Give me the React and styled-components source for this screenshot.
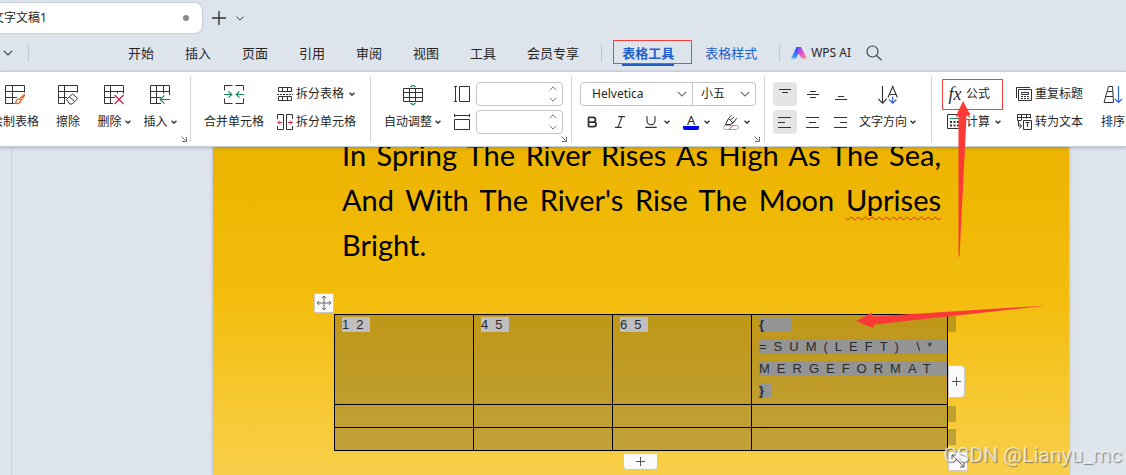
import styled, { createGlobalStyle, css } from "styled-components";
import { Bold, Italic, Underline } from "lucide-react";

const ink = "#333333";
const green = "#13855f";
const red = "#cf1f4c";
const blue = "#2b5fd9";

/* ---------- icons ---------- */

const Caret = () => (
  <svg width="6" height="4" viewBox="0 0 6 4" fill="none" stroke="#3c3c3c" strokeWidth="1.5">
    <path d="M.5.7 3 3.1 5.5.7" />
  </svg>
);

const Chevron = ({ size = 10, up, color = "#707070" }) => (
  <svg
    width={size}
    height={size / 2 + 1}
    viewBox="0 0 10 6"
    fill="none"
    stroke={color}
    strokeWidth="1.2"
  >
    <path d={up ? "M.8 5.2 5 1l4.2 4.2" : "M.8.8 5 5 9.2.8"} />
  </svg>
);

const Icon = ({ w = 20, h = 20, children }) => (
  <svg width={w} height={h} viewBox={`0 0 ${w} ${h}`} fill="none" stroke={ink}>
    {children}
  </svg>
);

const DrawTableIcon = () => (
  <Icon>
    <path d="M9 18.5H.5V.5h19v7M.5 6.5h19M.5 12.5H12M7.5.5v18" />
    <path
      d="M19.7 9.2 14 14.4M20 9.8l-4.4 6M13.6 14c1.4 0 2.2 1 2 2.2-.4 2-3 2.7-6 2.3 1.5-.6 1.4-1.5 1.8-2.700.4-1.200 1.200-1.800 2.200-1.800z"
      stroke="#d2622a"
      strokeWidth="1.2"
    />
  </Icon>
);

const EraseIcon = () => (
  <Icon>
    <path d="M7 18.5H.5V.5h19v7M.5 6.5h19M.5 12.5H9M6.5.5v18" />
    <path d="M8.5 14.5 14.5 9l5.200 4.500-5.500 5.500h-2.400zM11.500 12l5 4.500" />
  </Icon>
);

const DeleteIcon = () => (
  <Icon>
    <path d="M9 18.5H.5V.5h19v8M.5 6.5h19M.5 12.5H11M6.5.5v18M13.5 6.5v2" />
    <path d="m10.5 10 9 9M19.5 10l-9 9" stroke={red} strokeWidth="1.2" />
  </Icon>
);

const InsertIcon = () => (
  <Icon>
    <path d="M11 18.5H.5V.5h19V10M.5 6.5h19M.5 12.5H11M6.5.5v18M13.5.5v8" />
    <path d="M20 14.5h-9.500M14.500 10.300l-4.200 4.200 4.200 4.200" stroke={green} strokeWidth="1.2" />
  </Icon>
);

const MergeIcon = () => (
  <Icon>
    <path d="M8.500.5h-8v5M11.500.5h8v5M8.500 18.500h-8v-5M11.500 18.500h8v-5" />
    <path
      d="M0 9.5h7.500M4.500 6.300l3.200 3.200-3.200 3.200M20 9.500h-7.500M15.500 6.300l-3.200 3.200 3.200 3.200"
      stroke={green}
      strokeWidth="1.2"
    />
  </Icon>
);

const SplitTableIcon = () => (
  <Icon w={16} h={16}>
    <path d="M1.5 5.5v-4h13v4M1.5 5.5h13M5.5 1.5v4M10.5 1.5v4M1.5 10.5v4h13v-4zM5.5 10.5v4M10.5 10.5v4" />
    <path d="M0 8.5h16" strokeDasharray="2 1" />
  </Icon>
);

const SplitCellIcon = () => (
  <Icon w={16} h={16}>
    <path d="M.5 5V.5h6v15h-6V12M15.5 5V.5h-6v15h6V12" />
    <path d="M5 8.5H.8M2.800 6.500l-2 2 2 2M11 8.500h4.200M13.200 6.500l2 2-2 2" stroke={red} />
  </Icon>
);

const AutoFitIcon = () => (
  <Icon>
    <path d="M.5 3.5h19v13H.5zM.5 7.5h19M.5 12.5h19M6.5 3.5v13M12.5 3.5v13" />
    <path d="m7.5 2 2.500-2 2.500 2M7.500 18l2.500 2 2.500-2" stroke={green} strokeWidth="1.3" />
  </Icon>
);

const HeightIcon = () => (
  <Icon w={16} h={16}>
    <path d="M1.5.5v15M0 .5h3M0 15.5h3M5.5.5h10v15h-10z" />
  </Icon>
);

const WidthIcon = () => (
  <Icon w={16} h={16}>
    <path d="M.5 1.5h15M.5 0v3M15.5 0v3M.5 5.5h15v10H.5z" />
  </Icon>
);

const HighlightIcon = () => (
  <Icon w={16} h={16}>
    <path d="M2.500 10.500 5.500 4.500 10 9l-3 1.500H2.500M5.500 4.500 8.800.8M13.800 4.200 10 9M7 6.500l4-3.500" />
    <rect x=".5" y="11.5" width="15" height="4" rx="2" stroke="#a5a5a5" />
    <path d="m6 15 4-3.200" stroke="#e04444" />
  </Icon>
);

const lineSets = {
  top: "M1 2.5h12M4 5.5h6",
  middle: "M4 4.5h6M1 7.5h12M4 10.5h6",
  bottom: "M4 9.5h6M1 12.5h12",
  left: "M0 2.5h13M0 7.5h7M0 12.5h13",
  center: "M0 2.5h13M3 7.5h7M0 12.5h13",
  right: "M0 2.5h13M6 7.5h7M0 12.5h13",
};

const LinesIcon = ({ kind }) => (
  <Icon w={14} h={14}>
    <path d={lineSets[kind]} />
  </Icon>
);

const DirectionIcon = () => (
  <Icon>
    <path d="M4.500 1v17M.3 14l4.200 4.200L8.700 14M10 12.500l4.700-11 4.700 11M11.500 9.500h6.400" strokeWidth="1.100" />
    <path d="M14.700 11.500v6.700M11 14.500l3.700 3.700 3.700-3.700" stroke={blue} strokeWidth="1.200" />
  </Icon>
);

const CalcIcon = () => (
  <Icon w={16} h={16}>
    <path d="M14.500.5H.5v14h14z" />
    <path d="M2.500 4.500h10" stroke={green} />
    <path d="M3 8h10M3 11.500h10" strokeWidth="2" strokeDasharray="2 1.5" />
  </Icon>
);

const RepeatTitleIcon = () => (
  <Icon w={16} h={16}>
    <path d="M.5 12V1.500H14M2.500 14.500v-11h13v11zM5.500 6.500h7v2h-7zM5 10.500h2M8 10.500h2M11 10.500h2M5 12.500h2M8 12.500h2M11 12.500h2" />
  </Icon>
);

const ToTextIcon = () => (
  <Icon w={16} h={16}>
    <path d="M5 6.500H1.500v-6h13v4M1.500 3.500h13M5.500.5v6M10.500.5v4M2.500 7v5H5M3.500 9.500 5.500 12l-2 2.500M7.500 6.500h8v9h-8zM9.500 8.500h4M11.500 8.500V13" />
  </Icon>
);

const SortIcon = () => (
  <Icon>
    <path d="M1 17.500h9.500L9.500 1.500H5.500zM4.500 6.500h5.200M3 11.500h7" />
    <path d="M15.500 1v16.500M12 14l3.500 3.500L19 14" stroke={blue} strokeWidth="1.200" />
  </Icon>
);

const LauncherIcon = () => (
  <svg width="6" height="6" viewBox="0 0 6 6" fill="none" stroke="#6b6b6b">
    <path d="M.5.5 4.5 4.5M5.5 1v4.5H1" />
  </svg>
);

const AiLogo = () => (
  <svg width="16" height="12" viewBox="0 0 16 12">
    <defs>
      <linearGradient id="ai-left" x1="0" y1="1" x2="1" y2="0">
        <stop offset="0" stopColor="#4fc3ff" />
        <stop offset=".5" stopColor="#3567f5" />
        <stop offset="1" stopColor="#5b35ee" />
      </linearGradient>
      <linearGradient id="ai-right" x1="0" y1="0" x2="1" y2="1">
        <stop offset="0" stopColor="#5b4cf5" />
        <stop offset=".5" stopColor="#e950d0" />
        <stop offset="1" stopColor="#ff9a78" />
      </linearGradient>
    </defs>
    <path d="M5.500 0H10L5 11.500H0z" fill="url(#ai-left)" />
    <path d="M7.500 0H10l6 11.500h-5L6.500 5.500z" fill="url(#ai-right)" />
  </svg>
);

const SearchIcon = () => (
  <svg width="16" height="16" viewBox="0 0 16 16" fill="none" stroke="#444" strokeWidth="1.2">
    <circle cx="6.5" cy="6.5" r="5.5" />
    <path d="m10.5 10.500 5 4.700" />
  </svg>
);

const PlusIcon = () => (
  <svg width="9" height="9" viewBox="0 0 9 9" stroke="#555">
    <path d="M4.5 0v9M0 4.5h9" />
  </svg>
);

/* ---------- ribbon parts ---------- */

const BigAction = ({ icon, label, menu }) => (
  <BigButton>
    {icon}
    <ActionLabel>
      {label}
      {menu && <Caret />}
    </ActionLabel>
  </BigButton>
);

const SmallAction = ({ icon, label, menu, marked }) => (
  <SmallButton $marked={marked}>
    {icon}
    {label}
    {menu && (
      <CaretSlot>
        <Caret />
      </CaretSlot>
    )}
  </SmallButton>
);

const SizeField = ({ id, label, icon }) => (
  <SizeRow>
    <label htmlFor={id} aria-label={label}>
      {icon}
    </label>
    <SpinBox>
      <SpinInput id={id} type="text" />
      <SpinArrows>
        <Chevron size={8} up />
        <Chevron size={8} />
      </SpinArrows>
    </SpinBox>
  </SizeRow>
);

const Picker = ({ label, value, width, first }) => (
  <PickerBox $width={width} $first={first}>
    <PickerSelect aria-label={label} defaultValue={value} $indent={first ? 11 : 8}>
      <option>{value}</option>
    </PickerSelect>
    <Chevron size={10} />
  </PickerBox>
);

const Launch = ({ label }) => (
  <LaunchButton aria-label={label}>
    <LauncherIcon />
  </LaunchButton>
);

const tabs = ["开始", "插入", "页面", "引用", "审阅", "视图", "工具", "会员专享"];

const App = () => {
  return (
    <>
      <GlobalStyle />
      <Window>
        <TitleBar>
          <FileTab>
            文字文稿1
            <UnsavedDot />
          </FileTab>
          <IconButton aria-label="新建">
            <svg width="14" height="14" viewBox="0 0 14 14" stroke="#333" strokeWidth="1.4">
              <path d="M7 0v14M0 7h14" />
            </svg>
          </IconButton>
          <IconButton aria-label="更多">
            <Chevron size={8} color="#333" />
          </IconButton>
        </TitleBar>

        <MenuBar>
          <MenuStart>
            <IconButton aria-label="展开">
              <Chevron size={10} color="#444" />
            </IconButton>
            <MenuRule />
          </MenuStart>
          <TabList>
            {tabs.map((tab) => (
              <MenuTab key={tab} href="#">
                {tab}
              </MenuTab>
            ))}
          </TabList>
          <MenuRule />
          <TabList>
            <MenuTab href="#" $context $active>
              表格工具
            </MenuTab>
            <MenuTab href="#" $context>
              表格样式
            </MenuTab>
          </TabList>
          <MenuRule />
          <AiLink href="#">
            <AiLogo />
            WPS AI
          </AiLink>
          <IconButton aria-label="搜索">
            <SearchIcon />
          </IconButton>
        </MenuBar>

        <Ribbon>
          <Group $start $end={3}>
            <BigAction icon={<DrawTableIcon />} label="绘制表格" />
            <BigAction icon={<EraseIcon />} label="擦除" />
            <BigAction icon={<DeleteIcon />} label="删除" menu />
            <BigAction icon={<InsertIcon />} label="插入" menu />
            <Launch label="表格属性" />
          </Group>
          <Group $end={14}>
            <BigAction icon={<MergeIcon />} label="合并单元格" />
            <Stack $offset={7}>
              <SmallAction icon={<SplitTableIcon />} label="拆分表格" menu />
              <SmallAction icon={<SplitCellIcon />} label="拆分单元格" />
            </Stack>
          </Group>
          <Group>
            <BigAction icon={<AutoFitIcon />} label="自动调整" menu />
            <Stack $offset={7}>
              <SizeField id="row-height" label="高度" icon={<HeightIcon />} />
              <SizeField id="col-width" label="宽度" icon={<WidthIcon />} />
            </Stack>
            <Launch label="单元格大小" />
          </Group>
          <Group>
            <Stack>
              <Row>
                <Picker label="字体" value="Helvetica" width={113} first />
                <Picker label="字号" value="小五" width={63} />
              </Row>
              <Row $gap={4}>
                <ToggleButton aria-label="加粗">
                  <Bold size={14} color={ink} strokeWidth={3} />
                </ToggleButton>
                <ToggleButton aria-label="倾斜">
                  <Italic size={16} color={ink} strokeWidth={1.75} />
                </ToggleButton>
                <FormatButton aria-label="下划线">
                  <Underline size={16} color={ink} strokeWidth={1.75} />
                  <Caret />
                </FormatButton>
                <FormatButton>
                  <FontColor>A</FontColor>
                  <Caret />
                </FormatButton>
                <FormatButton aria-label="突出显示">
                  <HighlightIcon />
                  <Caret />
                </FormatButton>
              </Row>
            </Stack>
            <Launch label="字体设置" />
          </Group>
          <Group $end={9}>
            <Stack>
              <Row $gap={4}>
                <ToggleButton aria-label="顶端对齐" $on>
                  <LinesIcon kind="top" />
                </ToggleButton>
                <ToggleButton aria-label="垂直居中">
                  <LinesIcon kind="middle" />
                </ToggleButton>
                <ToggleButton aria-label="底端对齐">
                  <LinesIcon kind="bottom" />
                </ToggleButton>
              </Row>
              <Row $gap={4}>
                <ToggleButton aria-label="左对齐" $on>
                  <LinesIcon kind="left" />
                </ToggleButton>
                <ToggleButton aria-label="居中">
                  <LinesIcon kind="center" />
                </ToggleButton>
                <ToggleButton aria-label="右对齐">
                  <LinesIcon kind="right" />
                </ToggleButton>
              </Row>
            </Stack>
            <BigAction icon={<DirectionIcon />} label="文字方向" menu />
          </Group>
          <Group>
            <Stack $offset={8}>
              <SmallAction icon={<FxMark>fx</FxMark>} label="公式" marked />
              <SmallAction icon={<CalcIcon />} label="计算" menu />
            </Stack>
            <Stack $offset={15}>
              <SmallAction icon={<RepeatTitleIcon />} label="重复标题" />
              <SmallAction icon={<ToTextIcon />} label="转为文本" />
            </Stack>
            <Spacer />
            <BigAction icon={<SortIcon />} label="排序" />
          </Group>
        </Ribbon>

        <Workspace>
          <Gutter />
          <Page>
            <Verse>
              <VerseLine $full>In Spring The River Rises As High As The Sea,</VerseLine>
              <VerseLine $full>
                And With The River's Rise The Moon <Misspelt>Uprises</Misspelt>
              </VerseLine>
              <VerseLine>Bright.</VerseLine>
            </Verse>

            <TableFrame>
              <DataTable>
                <colgroup>
                  <NarrowCol />
                  <NarrowCol />
                  <NarrowCol />
                  <col />
                </colgroup>
                <tbody>
                  <tr>
                    <Cell>
                      <Selected>12</Selected>
                    </Cell>
                    <Cell>
                      <Selected>45</Selected>
                    </Cell>
                    <Cell>
                      <Selected>65</Selected>
                    </Cell>
                    <Cell $last>
                      <Field>
                        <Selected $field>
                          <b>{"{"}</b>
                          {"  "}
                        </Selected>
                        <Selected $field $fill>
                          {"=SUM(LEFT) \\*"}
                        </Selected>
                        <Selected $field $fill>
                          MERGEFORMAT
                        </Selected>
                        <Selected $field>
                          <b>{"}"}</b>
                        </Selected>
                      </Field>
                    </Cell>
                  </tr>
                  {[1, 2].map((row) => (
                    <tr key={row}>
                      <Cell />
                      <Cell />
                      <Cell />
                      <Cell $last />
                    </tr>
                  ))}
                </tbody>
              </DataTable>
              <MoveHandle aria-label="移动表格">
                <svg width="16" height="16" viewBox="0 0 16 16" fill="none" stroke="#666">
                  <path d="M8 1v14M1 8h14M6 3l2-2 2 2M6 13l2 2 2-2M3 6 1 8l2 2M13 6l2 2-2 2" />
                </svg>
              </MoveHandle>
              <AddColumn aria-label="添加列">
                <PlusIcon />
              </AddColumn>
              <AddRow aria-label="添加行">
                <PlusIcon />
              </AddRow>
              <ResizeHandle aria-label="调整表格大小">
                <svg width="14" height="14" viewBox="0 0 14 14" fill="none" stroke="#555">
                  <path d="M1 1l12 12M1 5V1h4M13 9v4H9" />
                </svg>
              </ResizeHandle>
            </TableFrame>
          </Page>
        </Workspace>

        <UpArrow width="16" height="156" viewBox="0 0 16 156">
          <path d="M8 0 15.500 14l-4 1L4.500 155.500h-1V15L.5 16z" />
        </UpArrow>
        <LeftArrow width="192" height="24" viewBox="0 0 192 24">
          <path d="M0 16 16 7.500l.5 4L191 .5 18 19.500l-.5 3.500z" />
        </LeftArrow>
        <Watermark>CSDN @Lianyu_mc</Watermark>
      </Window>
    </>
  );
};

/* ---------- styles ---------- */

const GlobalStyle = createGlobalStyle`
  * {
    box-sizing: border-box;
  }

  body {
    margin: 0;
    background: #dee4ec;
    color: #262626;
    font-family: "Noto Sans", "Noto Sans CJK SC", sans-serif;
    font-size: 12px;
    line-height: 16px;
  }

  svg {
    display: block;
    flex: none;
  }

  button {
    padding: 0;
    border: none;
    background: transparent;
    color: inherit;
    font: inherit;
    cursor: pointer;
  }
`;

const Window = styled.div`
  position: relative;
  display: flex;
  flex-direction: column;
  min-height: 100vh;
  overflow: hidden;
`;

const TitleBar = styled.header`
  display: flex;
  align-items: center;
  gap: 10px;
  padding: 3px 0 1px;
`;

/* the tab strip is scrolled a little past its left edge */
const FileTab = styled.div`
  display: flex;
  align-items: center;
  justify-content: space-between;
  width: 210px;
  height: 30px;
  margin-left: -8px;
  padding-right: 13px;
  border-radius: 0 7px 7px 0;
  background: #fff;
  box-shadow: 0 0 2px rgba(70, 90, 120, 0.5);
`;

const UnsavedDot = styled.span`
  width: 6px;
  height: 6px;
  border-radius: 50%;
  background: #8c8c8c;
`;

const IconButton = styled.button`
  display: flex;
  align-items: center;
`;

const MenuBar = styled.nav`
  display: flex;
  align-items: center;
  height: 37px;
  font-size: 13px;
  white-space: nowrap;
`;

const MenuStart = styled.div`
  display: flex;
  align-items: center;
  gap: 15px;
  width: 128px;
  padding-left: 3px;
`;

const MenuRule = styled.span`
  flex: none;
  width: 1px;
  height: 18px;
  background: #c0c5cc;
`;

const TabList = styled.div`
  display: flex;
  gap: 31px;
  padding-right: 22px;

  ${MenuRule} + & {
    padding-left: 20px;
  }
`;

const MenuTab = styled.a`
  position: relative;
  color: ${({ $context }) => ($context ? "#1f5fc8" : "#262626")};
  font-weight: ${({ $active }) => ($active ? 700 : 400)};
  line-height: 20px;
  text-decoration: none;

  ${({ $active }) =>
    $active &&
    css`
      /* underline of the open tab */
      &::before {
        content: "";
        position: absolute;
        inset: auto 0 -3px;
        height: 2px;
        background: #1f5fc8;
      }

      &::after {
        content: "";
        position: absolute;
        inset: -3px -18px -1px -9px;
        border: 1px solid #f5403c;
      }
    `}
`;

const AiLink = styled.a`
  display: flex;
  align-items: center;
  gap: 4px;
  padding: 0 15px 0 11px;
  color: #262626;
  font-size: 12px;
  text-decoration: none;
`;

const Ribbon = styled.section`
  position: relative;
  z-index: 1;
  display: flex;
  padding: 4px 0;
  border-top: 1px solid #c6ccd4;
  border-bottom: 1px solid #c6ccd4;
  background: #fff;
  box-shadow: 0 1px 3px rgba(60, 70, 90, 0.3);
  white-space: nowrap;
`;

const Group = styled.div`
  display: flex;
  flex: none;
  min-height: 66px;
  margin-left: ${({ $start }) => ($start ? "-15px" : 0)};
  padding: 0 ${({ $end = 4 }) => $end}px 0 ${({ $start }) => ($start ? 0 : 7)}px;
  border-right: 1px solid #d5d5d5;

  &:last-child {
    border-right: none;
  }
`;

const BigButton = styled.button`
  display: flex;
  flex-direction: column;
  align-items: center;
  gap: 9px;
  min-width: 46px;
  padding: 9px 6px 0;
`;

const ActionLabel = styled.span`
  display: flex;
  align-items: center;
  gap: 3px;
`;

const Stack = styled.div`
  display: flex;
  flex-direction: column;
  gap: 4px;
  margin-left: ${({ $offset = 1 }) => $offset}px;
  padding-top: 6px;
`;

const Row = styled.div`
  display: flex;
  gap: ${({ $gap = 0 }) => $gap}px;
`;

const Spacer = styled.span`
  width: 7px;
`;

const SmallButton = styled.button`
  position: relative;
  display: flex;
  align-items: center;
  gap: 3px;
  height: 24px;

  ${({ $marked }) =>
    $marked &&
    css`
      &::after {
        content: "";
        position: absolute;
        inset: -3px -2px -4px -5px;
        border: 1px solid #f5403c;
      }
    `}
`;

const CaretSlot = styled.span`
  padding-left: 2px;
`;

const FxMark = styled.span`
  width: 16px;
  font: italic 18px/20px "Liberation Serif", serif;
`;

const SizeRow = styled.div`
  display: flex;
  align-items: center;
  gap: 6px;
  height: 24px;
`;

const SpinBox = styled.div`
  display: flex;
  align-items: center;
  width: 87px;
  height: 24px;
  padding-right: 5px;
  border: 1px solid #c4c4c4;
  border-radius: 4px;
`;

const SpinInput = styled.input`
  flex: 1;
  min-width: 0;
  padding: 0 6px;
  border: none;
  outline: none;
  background: transparent;
  font: inherit;
`;

const SpinArrows = styled.span`
  display: flex;
  flex-direction: column;
  gap: 6px;
`;

const PickerBox = styled.div`
  display: flex;
  align-items: center;
  width: ${({ $width }) => $width}px;
  height: 24px;
  padding-right: 5px;
  border: 1px solid #c4c4c4;
  border-left-width: ${({ $first }) => ($first ? "1px" : 0)};
  border-radius: ${({ $first }) => ($first ? "4px 0 0 4px" : "0 4px 4px 0")};
`;

const PickerSelect = styled.select`
  flex: 1;
  min-width: 0;
  height: 22px;
  padding: 0 0 0 ${({ $indent }) => $indent}px;
  border: none;
  outline: none;
  appearance: none;
  background: transparent;
  color: inherit;
  font: inherit;
`;

const ToggleButton = styled.button`
  display: flex;
  align-items: center;
  justify-content: center;
  width: 24px;
  height: 24px;
  border-radius: 4px;
  background: ${({ $on }) => ($on ? "#e5e5e5" : "transparent")};
`;

const FormatButton = styled.button`
  display: flex;
  align-items: center;
  gap: 5px;
  width: 36px;
  height: 24px;
  padding-left: 7px;
`;

const FontColor = styled.span`
  width: 16px;
  border-bottom: 4px solid #0000f5;
  border-radius: 2px;
  font-size: 13px;
  line-height: 12px;
`;

const LaunchButton = styled.button`
  align-self: flex-end;
  width: 6px;
  height: 6px;
  margin-left: -2px;
`;

const Workspace = styled.main`
  display: flex;
  flex: 1;
  overflow: hidden;
`;

const Gutter = styled.div`
  flex: none;
  width: 12px;
  border-right: 1px solid #c9d0d9;
`;

const Page = styled.article`
  flex: 1;
  margin: 0 57px 0 201px;
  padding: 0 121px 23px;
  background: linear-gradient(#ecb400, #f3bd0c 45%, #f8cf4a);
  box-shadow: 0 0 3px rgba(60, 80, 110, 0.4);
`;

/* starts above the fold, the page is scrolled down */
const Verse = styled.p`
  margin: -15px 0 0;
  padding: 0 7px 0 8px;
  color: #000;
  font-family: Lato, "Open Sans", sans-serif;
  font-size: 29px;
  line-height: 45px;
`;

const VerseLine = styled.span`
  display: block;
  text-align-last: ${({ $full }) => ($full ? "justify" : "left")};
`;

const Misspelt = styled.span`
  text-decoration: underline wavy #e8201a 1px;
  text-decoration-skip-ink: none;
  text-underline-offset: 5px;
`;

const TableFrame = styled.div`
  position: relative;
  margin-top: 47px;
`;

const DataTable = styled.table`
  width: 100%;
  table-layout: fixed;
  border-collapse: collapse;
  background: rgba(38, 38, 38, 0.26);
`;

const NarrowCol = styled.col`
  width: 139px;
`;

const Cell = styled.td`
  position: relative;
  height: 23px;
  padding: 2px 7px;
  border: 1px solid #000;
  color: #2a2a2a;
  font: 13px/15px "Liberation Sans", sans-serif;
  vertical-align: top;

  ${({ $last }) =>
    $last &&
    css`
      /* selected end-of-row mark */
      &::after {
        content: "";
        position: absolute;
        top: 1px;
        left: calc(100% + 1px);
        width: 8px;
        height: 16px;
        background: rgba(38, 38, 38, 0.26);
      }
    `}
`;

const Field = styled.div`
  display: flex;
  flex-direction: column;
  align-items: flex-start;
  gap: 7px;
  padding-bottom: 4px;
`;

const Selected = styled.span`
  display: inline-block;
  align-self: ${({ $fill }) => ($fill ? "stretch" : "auto")};
  margin-right: ${({ $fill }) => ($fill ? "-7px" : 0)};
  background: ${({ $field }) => ($field ? "#949494" : "#bfbfbf")};
  letter-spacing: 7px;
  white-space: pre;
`;

const handle = css`
  position: absolute;
  display: flex;
  align-items: center;
  justify-content: center;
  border: 1px solid #c8c8c8;
  border-radius: 2px;
  background: #fafafa;
`;

const MoveHandle = styled.button`
  ${handle}
  top: -21px;
  left: -20px;
  width: 20px;
  height: 20px;
`;

const AddColumn = styled.button`
  ${handle}
  top: 51px;
  left: 100%;
  width: 17px;
  height: 33px;
  border-radius: 0 4px 4px 0;
`;

const AddRow = styled.button`
  ${handle}
  top: calc(100% + 2px);
  left: calc(50% - 18px);
  width: 35px;
  height: 17px;
  border-radius: 0 0 4px 4px;
`;

const ResizeHandle = styled.button`
  ${handle}
  top: 100%;
  left: 100%;
  width: 20px;
  height: 20px;
`;

const UpArrow = styled.svg`
  position: absolute;
  z-index: 2;
  top: 101px;
  left: 955px;
  fill: #fb3a37;
`;

const LeftArrow = styled.svg`
  position: absolute;
  z-index: 2;
  top: 305px;
  left: 856px;
  fill: #fb3a37;
`;

const Watermark = styled.span`
  position: absolute;
  right: 4px;
  bottom: 8px;
  color: rgba(255, 255, 255, 0.7);
  font: 21px/24px Roboto, sans-serif;
  text-shadow: 1px 1px 1px rgba(90, 90, 90, 0.7);
`;

export default App;
